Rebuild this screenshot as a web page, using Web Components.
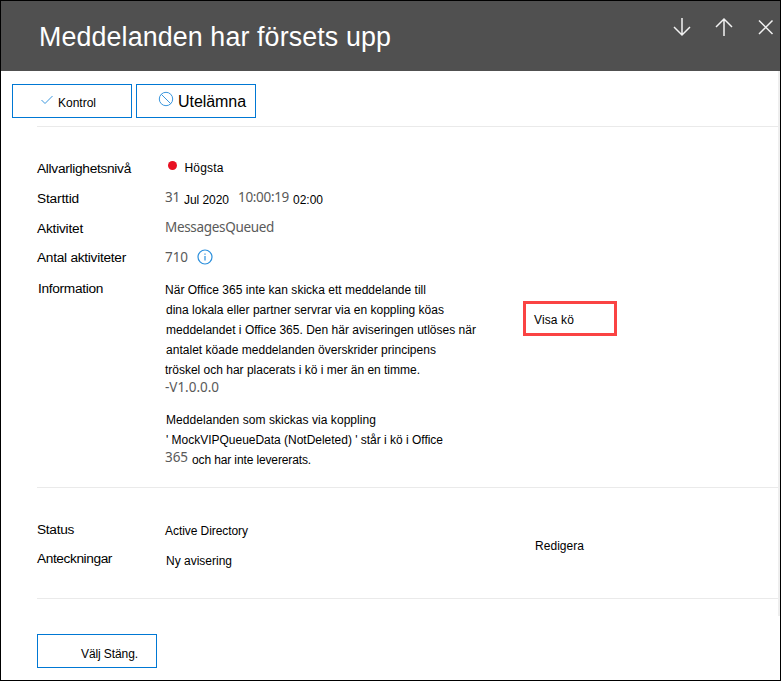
<!DOCTYPE html>
<html lang="sv">
<head>
<meta charset="utf-8">
<title>Meddelanden har försets upp</title>
<style>
  html, body { margin: 0; padding: 0; background: #fff; }
  body { font-family: "Liberation Sans", Arial, sans-serif; color: #000; }
</style>
</head>
<body>
<alert-panel></alert-panel>
<script>
// A single line of text, letter-spaced so that it fills the width given in "w".
class TextRun extends HTMLElement {
  connectedCallback() {
    const root = this.attachShadow({ mode: 'open' });
    const size = this.getAttribute('size') || '12';
    const w = parseFloat(this.getAttribute('w'));
    const soft = this.hasAttribute('soft');
    root.innerHTML = `<style>
      :host { display: block; flex: none; width: ${w}px; height: 20px; line-height: 20px; white-space: pre;
        font-size: ${size}px; ${soft ? 'font-family: "Noto Sans", sans-serif; color: #5a5a5a;' : ''} }
      :host([slot="label"]) { padding-top: 1px; }
      span { display: inline-block; }
    </style><span><slot></slot></span>`;
    const span = root.querySelector('span');
    const natural = span.getBoundingClientRect().width;
    span.style.letterSpacing = ((w - natural) / this.textContent.length) + 'px';
  }
}

class HeaderBar extends HTMLElement {
  connectedCallback() {
    this.attachShadow({ mode: 'open' }).innerHTML = `<style>
      :host { display: flex; justify-content: space-between; height: 70px; box-sizing: border-box;
        background: #505050; color: #fff; padding: 26px 4px 0 38px; }
      nav { display: flex; gap: 22px; margin-top: -12px; }
      svg { display: block; width: 20px; height: 22px; fill: none; stroke: #f2f2f2; stroke-width: 1.5; }
    </style>
    <slot></slot>
    <nav>
      <svg viewBox="0 0 20 22"><path d="M10 3v17M2 12l8 8 8-8"/></svg>
      <svg viewBox="0 0 20 22"><path d="M10 21V4M2 12l8-8 8 8"/></svg>
      <svg viewBox="0 0 20 22"><path d="M3 5.500l13.500 13.500M16.500 5.500L3 19"/></svg>
    </nav>`;
  }
}

class OutlineButton extends HTMLElement {
  connectedCallback() {
    this.attachShadow({ mode: 'open' }).innerHTML = `<style>
      :host { display: flex; box-sizing: border-box; width: 120px; height: 34px; border: 1px solid #0078d4; }
      ::slotted(svg) { display: block; flex: none; fill: none; stroke: #3a96dd; }
    </style><slot></slot>`;
  }
}

// Label in the first column, value in the second, optional action in the third.
class DetailRow extends HTMLElement {
  connectedCallback() {
    this.attachShadow({ mode: 'open' }).innerHTML = `<style>
      :host { display: grid; grid-template-columns: 128px 358px auto; align-items: start; height: var(--h, 30px); }
      .value { display: flex; }
      :host([stack]) .value { flex-direction: column; }
    </style>
    <slot name="label"></slot><div class="value"><slot></slot></div><slot name="action"></slot>`;
  }
}

class SeverityDot extends HTMLElement {
  connectedCallback() {
    this.attachShadow({ mode: 'open' }).innerHTML = `<style>
      :host { display: block; flex: none; width: 9px; height: 9px; border-radius: 50%; background: #e81123; margin: 2.500px 8px 0 2.500px; }
    </style>`;
  }
}

class InfoIcon extends HTMLElement {
  connectedCallback() {
    this.attachShadow({ mode: 'open' }).innerHTML = `<style>
      :host { display: block; margin: 2px 0 0 9px; }
      svg { display: block; width: 16px; height: 16px; }
    </style><svg viewBox="0 0 16 16"><circle cx="8" cy="8" r="7" fill="none" stroke="#2b8fdc" stroke-width="1.200"/>
      <path d="M8 7v4.500M8 4.500v1.300" stroke="#2b8fdc" stroke-width="1.200"/></svg>`;
  }
}

class ActionBox extends HTMLElement {
  connectedCallback() {
    this.attachShadow({ mode: 'open' }).innerHTML = `<style>
      :host { display: block; box-sizing: border-box; width: 94px; height: 35px; border: 3px solid #fa4343; padding: 6px 0 0 8px; }
    </style><slot></slot>`;
  }
}

class AlertPanel extends HTMLElement {
  connectedCallback() {
    this.attachShadow({ mode: 'open' }).innerHTML = `<style>
      :host { display: flex; flex-direction: column; box-sizing: border-box; width: 781px; height: 681px;
        border: 1px solid #000; background: #fff; overflow: hidden; }
      .body { display: flex; flex: 1; align-items: flex-start; }
      .track { width: 2px; height: 545px; background: #eee; }
      main { width: 777px; }
      .tools { display: flex; gap: 4px; padding: 13px 0 8px 11px; }
      section { box-sizing: border-box; margin-left: 36px; border-top: 1px solid #eaeaea; }
      .details { height: 361px; padding-top: 31px; }
      .status { height: 111px; padding-top: 31px; }
      .footer { padding-top: 35px; }
      .line { display: flex; }
    </style>
    <header-bar><text-run size="26.800" w="352">Meddelanden har försets upp</text-run></header-bar>
    <div class="body">
      <main>
        <div class="tools">
          <outline-button>
            <svg width="12" height="10" viewBox="0 0 12 10" style="margin:10px 5px 0 28px"><path d="M.5 5l3.500 3.500L11.500 1"/></svg>
            <text-run w="38" style="margin-top:8px">Kontrol</text-run>
          </outline-button>
          <outline-button>
            <svg width="16" height="16" viewBox="0 0 16 16" style="margin:6px 4px 0 21px"><circle cx="8" cy="8" r="6.700"/><path d="M3.300 3.300l9.400 9.400"/></svg>
            <text-run size="16" w="68" style="margin-top:7px">Utelämna</text-run>
          </outline-button>
        </div>
        <section class="details">
          <detail-row>
            <text-run slot="label" size="13.700" w="94">Allvarlighetsnivå</text-run>
            <severity-dot></severity-dot><text-run w="39">Högsta</text-run>
          </detail-row>
          <detail-row>
            <text-run slot="label" size="13.700" w="42">Starttid</text-run>
            <text-run soft size="13.500" w="15" style="margin:-1px 4px 0 0">31</text-run>
            <text-run w="45" style="margin:2px 9px 0 0">Jul 2020</text-run>
            <text-run soft size="13.500" w="51" style="margin:-1px 4px 0 0">10:00:19</text-run>
            <text-run w="30" style="margin-top:2px">02:00</text-run>
          </detail-row>
          <detail-row style="--h:29px">
            <text-run slot="label" size="13.700" w="46">Aktivitet</text-run>
            <text-run soft size="13.500" w="109" style="margin-top:-1px">MessagesQueued</text-run>
          </detail-row>
          <detail-row style="--h:31px">
            <text-run slot="label" size="13.700" w="89">Antal aktiviteter</text-run>
            <text-run soft size="13.500" w="23">710</text-run><info-icon></info-icon>
          </detail-row>
          <detail-row stack style="--h:200px">
            <text-run slot="label" size="13.700" w="65" style="margin-left:1px">Information</text-run>
            <text-run w="261" style="margin-top:2px">När Office 365 inte kan skicka ett meddelande till</text-run>
            <text-run w="278" style="margin-left:1px">dina lokala eller partner servrar via en koppling köas</text-run>
            <text-run w="310" style="margin-left:1px">meddelandet i Office 365. Den här aviseringen utlöses när</text-run>
            <text-run w="270" style="margin-left:1px">antalet köade meddelanden överskrider principens</text-run>
            <text-run w="255">tröskel och har placerats i kö i mer än en timme.</text-run>
            <text-run soft size="13.500" w="54" style="margin:-3px 0 13px">-V1.0.0.0</text-run>
            <text-run w="210" style="margin-left:1px">Meddelanden som skickas via koppling</text-run>
            <text-run w="277" style="margin-left:1px">' MockVIPQueueData (NotDeleted) ' står i kö i Office</text-run>
            <div class="line">
              <text-run soft size="13.500" w="23" style="margin:-3px 4px 0 0">365</text-run>
              <text-run w="119">och har inte levererats.</text-run>
            </div>
            <action-box slot="action" style="margin-top:23px"><text-run w="40">Visa kö</text-run></action-box>
          </detail-row>
        </section>
        <section class="status">
          <detail-row style="--h:29px">
            <text-run slot="label" size="13.700" w="37">Status</text-run>
            <text-run w="83" style="margin-top:2px">Active Directory</text-run>
            <text-run slot="action" w="49" style="margin:17px 0 0 12px">Redigera</text-run>
          </detail-row>
          <detail-row>
            <text-run slot="label" size="13.700" w="75">Anteckningar</text-run>
            <text-run w="66" style="margin:3px 0 0 1px">Ny avisering</text-run>
          </detail-row>
        </section>
        <section class="footer">
          <outline-button><text-run w="57" style="margin:9px 0 0 43px">Välj Stäng.</text-run></outline-button>
        </section>
      </main>
      <div class="track"></div>
    </div>`;
  }
}

customElements.define('text-run', TextRun);
customElements.define('header-bar', HeaderBar);
customElements.define('outline-button', OutlineButton);
customElements.define('detail-row', DetailRow);
customElements.define('severity-dot', SeverityDot);
customElements.define('info-icon', InfoIcon);
customElements.define('action-box', ActionBox);
customElements.define('alert-panel', AlertPanel);
</script>
</body>
</html>
